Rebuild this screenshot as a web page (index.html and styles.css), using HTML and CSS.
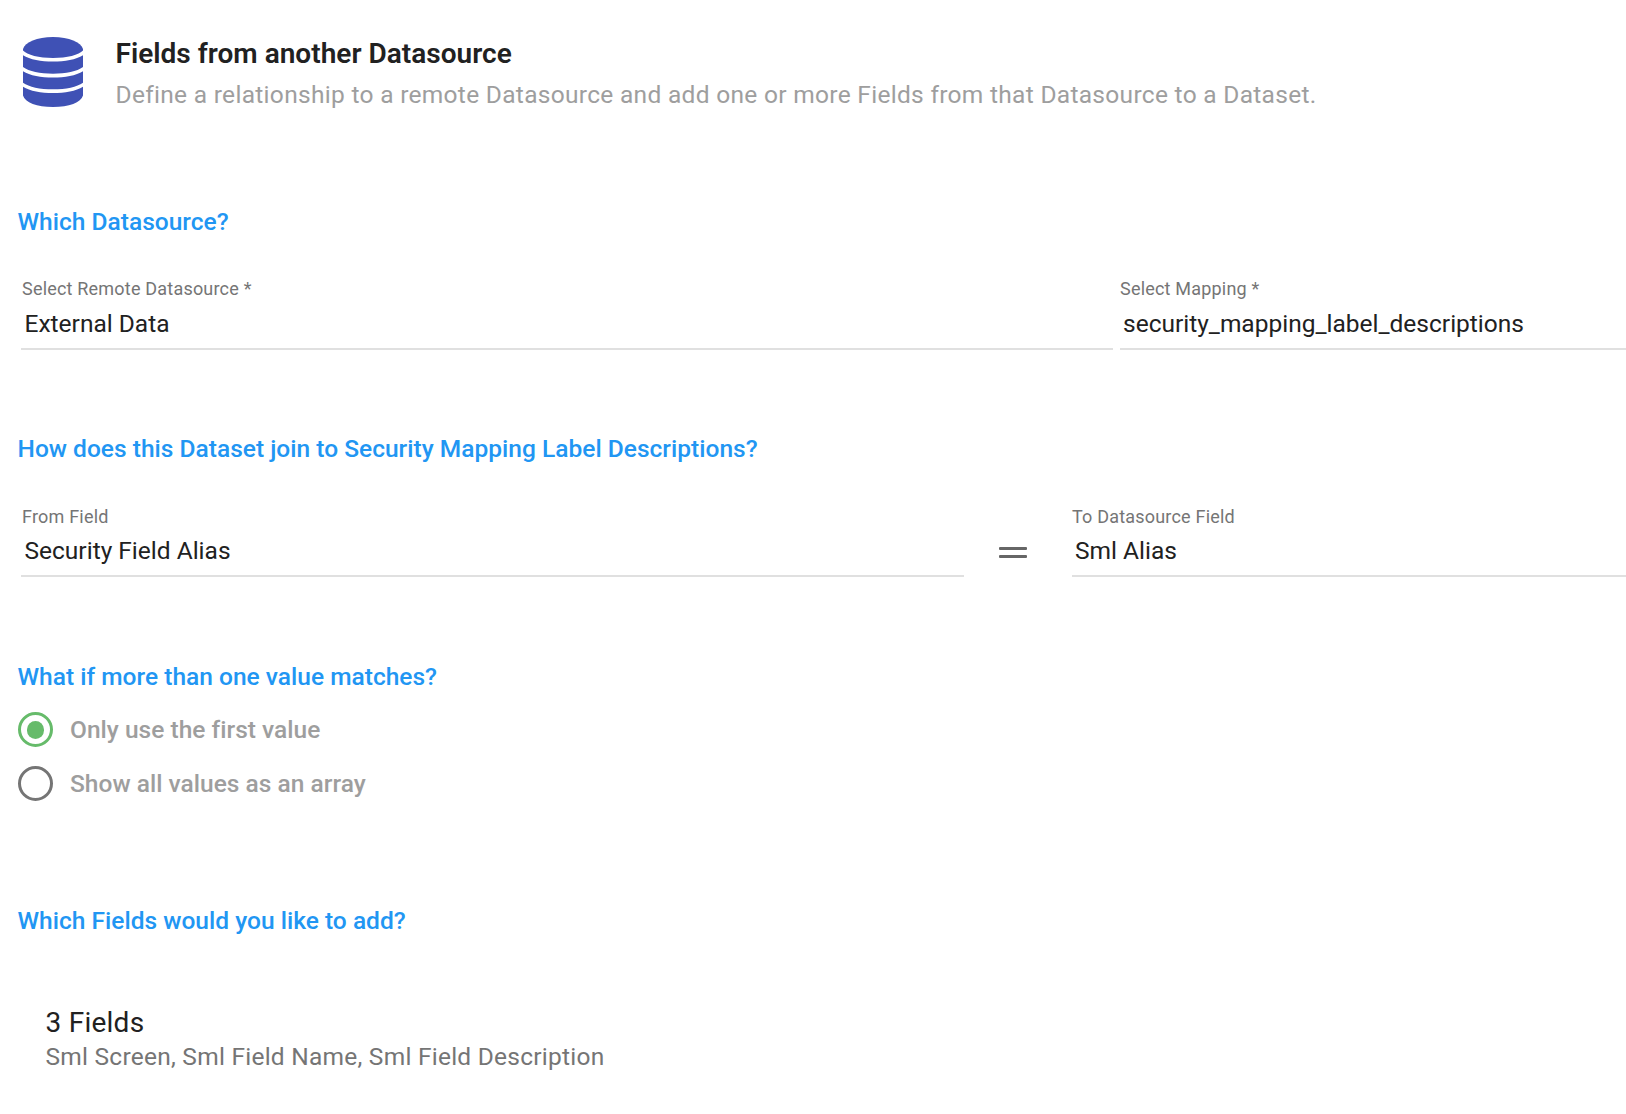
FILE: index.html
```
<!DOCTYPE html>
<html lang="en">
<head>
<meta charset="utf-8">
<title>Fields from another Datasource</title>
<link rel="stylesheet" href="styles.css">
</head>
<body>
<main class="page">
  <header class="header">
    <svg class="header-icon" viewBox="0 0 60 70" width="60" height="70" aria-hidden="true">
      <path d="M0 12C2 5 14 0 30 0S58 5 60 12V13.5C56 18 44 21 30 21S4 18 0 13.5Z"/>
      <path d="M0 18.2C7 22.6 18 24.5 30 24.5S53 22.6 60 18.2V30C54 34.4 43 36.7 30 36.7S6 34.4 0 30Z"/>
      <path d="M0 34.2C7 38.6 18 40.5 30 40.5S53 38.6 60 34.2V45.7C54 50 43 52.3 30 52.3S6 50 0 45.7Z"/>
      <path d="M0 49.8C7 54.2 18 56.1 30 56.1S53 54.2 60 49.8V58.5C58 65.5 46 70 30 70S2 65.5 0 58.5Z"/>
    </svg>
    <div>
      <h1 class="title">Fields from another Datasource</h1>
      <p class="subtitle">Define a relationship to a remote Datasource and add one or more Fields from that Datasource to a Dataset.</p>
    </div>
  </header>

  <section class="section section-source">
    <h2 class="question">Which Datasource?</h2>
    <div class="fields">
      <div class="field field-source">
        <label class="field-label">Select Remote Datasource *</label>
        <div class="field-value">External Data</div>
      </div>
      <div class="field field-rest">
        <label class="field-label">Select Mapping *</label>
        <div class="field-value">security_mapping_label_descriptions</div>
      </div>
    </div>
  </section>

  <section class="section section-join">
    <h2 class="question">How does this Dataset join to Security Mapping Label Descriptions?</h2>
    <div class="fields">
      <div class="field field-from">
        <label class="field-label">From Field</label>
        <div class="field-value">Security Field Alias</div>
      </div>
      <div class="equals"><span></span><span></span></div>
      <div class="field field-rest">
        <label class="field-label">To Datasource Field</label>
        <div class="field-value">Sml Alias</div>
      </div>
    </div>
  </section>

  <section class="section section-match">
    <h2 class="question">What if more than one value matches?</h2>
    <div class="radios">
      <div class="radio radio-checked"><span class="radio-dot"></span>Only use the first value</div>
      <div class="radio"><span class="radio-dot"></span>Show all values as an array</div>
    </div>
  </section>

  <section class="section section-add">
    <h2 class="question">Which Fields would you like to add?</h2>
    <div class="summary">
      <div class="summary-title">3 Fields</div>
      <div class="summary-list">Sml Screen, Sml Field Name, Sml Field Description</div>
    </div>
  </section>
</main>
</body>
</html>
```
FILE: styles.css
```
* {
  box-sizing: border-box;
}

body {
  margin: 0;
  background: #fff;
  color: #212121;
  font-family: Roboto, "Liberation Sans", sans-serif;
  font-size: 24.5px;
  overflow: hidden;
}

h1, h2, p {
  margin: 0;
}

.page {
  height: 1114px;
  padding-top: 33px;
}

.header {
  display: flex;
  gap: 32.5px;
  padding-left: 23px;
}

.header-icon {
  flex: none;
  margin-top: 4px;
  fill: #3f51b5;
}

.title {
  font-size: 28px;
  font-weight: 600;
  line-height: 41px;
  letter-spacing: 0.02px;
}

.subtitle {
  color: #9e9e9e;
  line-height: 42px;
  letter-spacing: 0.3px;
  white-space: nowrap;
}

.question {
  padding-left: 17.5px;
  color: #2196f3;
  font-size: 24.5px;
  font-weight: 500;
  line-height: 42px;
  letter-spacing: 0.015px;
}

.section-source {
  margin-top: 85px;
}

.section-join {
  margin-top: 78px;
}

.section-match {
  margin-top: 79px;
}

.section-add {
  margin-top: 99px;
}

.fields {
  display: flex;
  margin-top: 34px;
  padding-left: 21px;
}

.field {
  height: 73px;
  border-bottom: 2px solid #e0e0e0;
}

.field-source {
  width: 1092px;
  margin-right: 7px;
}

.field-from {
  width: 943px;
}

.field-rest {
  flex: 1;
}

.field-label {
  display: block;
  padding-left: 1px;
  color: #757575;
  font-size: 18px;
  letter-spacing: 0.2px;
  line-height: 24px;
}

.field-rest .field-label {
  padding-left: 0;
}

.field-value {
  padding: 2px 0 0 3.5px;
  line-height: 42px;
}

.field-rest .field-value {
  padding-left: 3px;
}

.section-join .field-label {
  padding-top: 1px;
}

.section-join .field-value {
  padding-top: 1px;
}

.equals {
  display: flex;
  flex-direction: column;
  gap: 5px;
  width: 28px;
  margin: 43px 45px 0 35px;
}

.equals span {
  height: 3px;
  border-radius: 1px;
  background: #666;
}

.radios {
  display: flex;
  flex-direction: column;
  gap: 19px;
  padding: 14.4px 0 0 18px;
}

.radio {
  display: flex;
  align-items: center;
  gap: 17px;
  height: 35px;
  color: #9e9e9e;
  font-weight: 500;
  letter-spacing: 0.02px;
}

.radio-dot {
  display: grid;
  place-items: center;
  width: 35px;
  height: 35px;
  border: 3px solid #757575;
  border-radius: 50%;
}

.radio-checked .radio-dot {
  border-color: #66bb6a;
}

.radio-checked .radio-dot::after {
  content: "";
  width: 17.5px;
  height: 17.5px;
  border-radius: 50%;
  background: #66bb6a;
}

.summary {
  padding: 63.6px 0 0 45.5px;
}

.summary-title {
  font-size: 28px;
  line-height: 34px;
  letter-spacing: 0.25px;
}

.summary-list {
  color: #757575;
  line-height: 34px;
  letter-spacing: 0.245px;
}
```
